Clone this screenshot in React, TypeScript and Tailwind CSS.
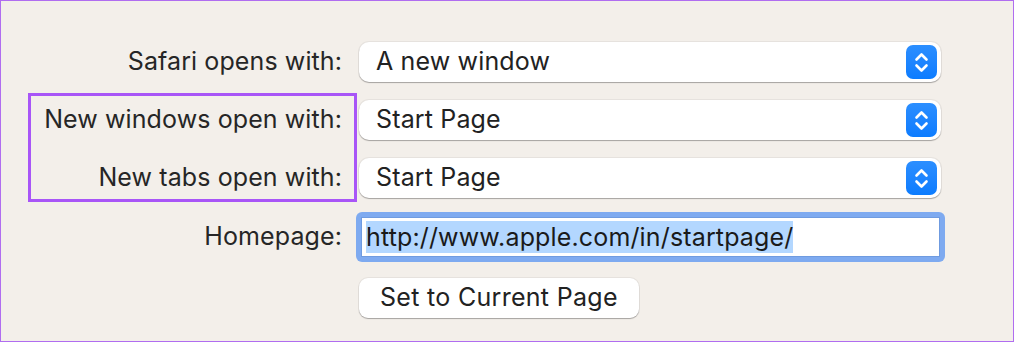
import { ReactNode } from 'react'

const font = { fontFamily: 'Inter, "Noto Sans", sans-serif' }

function Stepper() {
  return (
    <div className="w-[31px] h-[34px] rounded-[7px] bg-gradient-to-b from-[#2b8eff] to-[#0b7cff] flex items-center justify-center">
      <svg width="31" height="34" viewBox="0 0 31 34" fill="none" stroke="white" strokeWidth="2.6" strokeLinecap="round" strokeLinejoin="round">
        <path d="M10.5 14.5 L15.5 9.5 L20.5 14.5" />
        <path d="M10.5 20.5 L15.5 25.5 L20.5 20.5" />
      </svg>
    </div>
  )
}

function Popup({ value }: { value: string }) {
  return (
    <div className="w-[582px] h-[40px] bg-white rounded-[10px] shadow-[0_1px_1px_rgba(0,0,0,0.28),0_0_0_1px_rgba(0,0,0,0.05)] flex items-center justify-between pl-[17px] pr-[4px]">
      <span className="text-[25px] tracking-[0.15px] text-[#222]">{value}</span>
      <Stepper />
    </div>
  )
}

function Row({ label, children, className }: { label?: string; children: ReactNode; className?: string }) {
  return (
    <div className={`flex items-center ${className ?? ''}`}>
      <div className="w-[341px] text-right text-[25px] tracking-[0.1px] text-[#262626]">{label}</div>
      <div className="ml-[17px]">{children}</div>
    </div>
  )
}

export default function App() {
  return (
    <div style={font} className="relative w-[1014px] h-[342px] bg-[#f3efea] border border-[#b06df0] pt-[41px]">
      <Row label="Safari opens with:">
        <Popup value="A new window" />
      </Row>
      <Row label="New windows open with:" className="mt-[18px]">
        <Popup value="Start Page" />
      </Row>
      <Row label="New tabs open with:" className="mt-[18px]">
        <Popup value="Start Page" />
      </Row>
      <Row label="Homepage:" className="mt-[14px]">
        <div className="-ml-[3px] w-[589px] h-[50px] rounded-[6px] bg-[#7eaaf0] p-[5px]">
          <div className="h-full bg-white border border-[#6f9be0] flex items-center pl-[4px]">
            <span className="text-[25px] tracking-[0.15px] text-[#1a1a1a] bg-[#b3d7ff] leading-[32px]">http://www.apple.com/in/startpage/</span>
          </div>
        </div>
      </Row>
      <Row className="mt-[16px]">
        <button className="h-[40px] px-[21px] bg-white rounded-[9px] shadow-[0_1px_1px_rgba(0,0,0,0.28),0_0_0_1px_rgba(0,0,0,0.05)] text-[25px] tracking-[0.3px] text-[#222]">
          Set to Current Page
        </button>
      </Row>
      <div className="absolute left-[27px] top-[92px] w-[329px] h-[109px] border-[3px] border-[#a855f7]" />
    </div>
  )
}
